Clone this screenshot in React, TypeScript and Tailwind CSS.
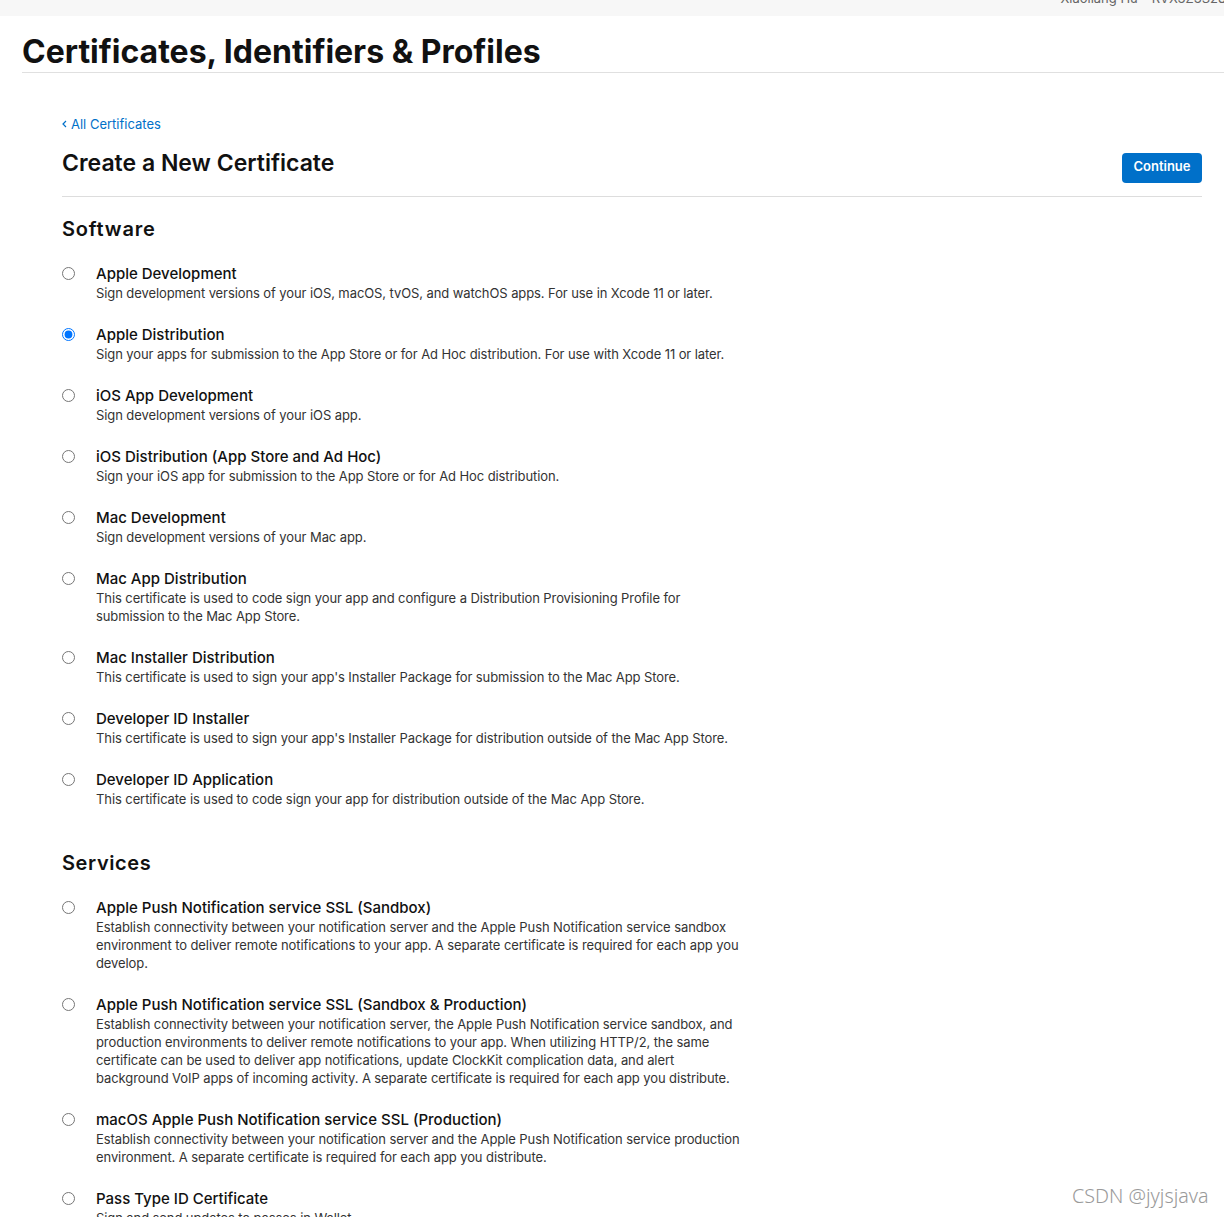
import React from "react";

type Cert = { title: string; desc: string; checked?: boolean };

const SOFTWARE: Cert[] = [
  {
    title: "Apple Development",
    desc: "Sign development versions of your iOS, macOS, tvOS, and watchOS apps. For use in Xcode 11 or later.",
  },
  {
    title: "Apple Distribution",
    desc: "Sign your apps for submission to the App Store or for Ad Hoc distribution. For use with Xcode 11 or later.",
    checked: true,
  },
  {
    title: "iOS App Development",
    desc: "Sign development versions of your iOS app.",
  },
  {
    title: "iOS Distribution (App Store and Ad Hoc)",
    desc: "Sign your iOS app for submission to the App Store or for Ad Hoc distribution.",
  },
  {
    title: "Mac Development",
    desc: "Sign development versions of your Mac app.",
  },
  {
    title: "Mac App Distribution",
    desc: "This certificate is used to code sign your app and configure a Distribution Provisioning Profile for submission to the Mac App Store.",
  },
  {
    title: "Mac Installer Distribution",
    desc: "This certificate is used to sign your app's Installer Package for submission to the Mac App Store.",
  },
  {
    title: "Developer ID Installer",
    desc: "This certificate is used to sign your app's Installer Package for distribution outside of the Mac App Store.",
  },
  {
    title: "Developer ID Application",
    desc: "This certificate is used to code sign your app for distribution outside of the Mac App Store.",
  },
];

const SERVICES: Cert[] = [
  {
    title: "Apple Push Notification service SSL (Sandbox)",
    desc: "Establish connectivity between your notification server and the Apple Push Notification service sandbox environment to deliver remote notifications to your app. A separate certificate is required for each app you develop.",
  },
  {
    title: "Apple Push Notification service SSL (Sandbox & Production)",
    desc: "Establish connectivity between your notification server, the Apple Push Notification service sandbox, and production environments to deliver remote notifications to your app. When utilizing HTTP/2, the same certificate can be used to deliver app notifications, update ClockKit complication data, and alert background VoIP apps of incoming activity. A separate certificate is required for each app you distribute.",
  },
  {
    title: "macOS Apple Push Notification service SSL (Production)",
    desc: "Establish connectivity between your notification server and the Apple Push Notification service production environment. A separate certificate is required for each app you distribute.",
  },
  {
    title: "Pass Type ID Certificate",
    desc: "Sign and send updates to passes in Wallet.",
  },
];

function CertOption({ c }: { c: Cert }) {
  return (
    <label className="flex items-start">
      <input
        type="radio"
        name="certType"
        defaultChecked={c.checked}
        className="m-0 mt-[3px] w-[13px] h-[13px] shrink-0"
      />
      <div className="ml-[21px] max-w-[648px]">
        <div className="text-[15px] leading-[20px] font-medium text-[#111111]">
          {c.title}
        </div>
        <div className="text-[13px] leading-[18px] tracking-[-0.09px] text-[#333333]">
          {c.desc}
        </div>
      </div>
    </label>
  );
}

export default function App() {
  return (
    <div
      className="relative bg-white min-h-[1217px]"
      style={{ fontFamily: "Inter, 'Noto Sans', sans-serif" }}
    >
      {/* Top bar (scrolled off) */}
      <div className="h-4 bg-[#f7f7f7] overflow-hidden flex items-end justify-end pb-[10px]">
        <div className="flex gap-[14px] text-[13px] leading-[16px] text-[#666666] whitespace-nowrap -mr-[12px]">
          <span>Xiaoliang Hu</span>
          <span>RVX3Z3S28Q</span>
        </div>
      </div>

      {/* Header */}
      <div className="ml-[22px] pt-[16px] border-b border-[#e0e0e0]">
        <h1 className="text-[32px] leading-[40px] font-bold text-[#111111]">
          Certificates, Identifiers &amp; Profiles
        </h1>
      </div>

      {/* Content */}
      <div className="pl-[62px] pr-[22px]">
        <div className="pt-[42px] border-b border-[#dddddd] pb-[13px]">
          <a className="flex items-center gap-[4px] text-[13px] leading-[18px] text-[#0070c9]">
            <svg width="5" height="8" viewBox="0 0 5 8" fill="none">
              <path d="M4 1L1 4l3 3" stroke="#0070c9" strokeWidth="1.2" />
            </svg>
            All Certificates
          </a>
          <div className="mt-[14px] flex items-start justify-between">
            <h2 className="text-[23px] leading-[32px] font-semibold text-[#111111]">
              Create a New Certificate
            </h2>
            <button className="mt-[6px] h-[30px] w-[80px] rounded-[4px] bg-[#0070c9] text-white text-[13px] leading-[26px] font-semibold pb-[4px]">
              Continue
            </button>
          </div>
        </div>

        <h3 className="mt-[18px] text-[20px] leading-[28px] font-semibold text-[#111111] tracking-[0.8px]">
          Software
        </h3>
        <div className="mt-[21px] flex flex-col gap-[23px]">
          {SOFTWARE.map((c) => (
            <CertOption key={c.title} c={c} />
          ))}
        </div>

        <h3 className="mt-[41px] text-[20px] leading-[28px] font-semibold text-[#111111] tracking-[0.6px]">
          Services
        </h3>
        <div className="mt-[21px] flex flex-col gap-[23px] pb-10">
          {SERVICES.map((c) => (
            <CertOption key={c.title} c={c} />
          ))}
        </div>
      </div>

      {/* Watermark */}
      <div
        className="absolute left-[1072px] top-[1182px] text-[19.7px] leading-[28px] font-light text-[#9a9a9a] whitespace-nowrap"
        style={{ fontFamily: "'Noto Sans', sans-serif" }}
      >
        CSDN @jyjsjava
      </div>
    </div>
  );
}
